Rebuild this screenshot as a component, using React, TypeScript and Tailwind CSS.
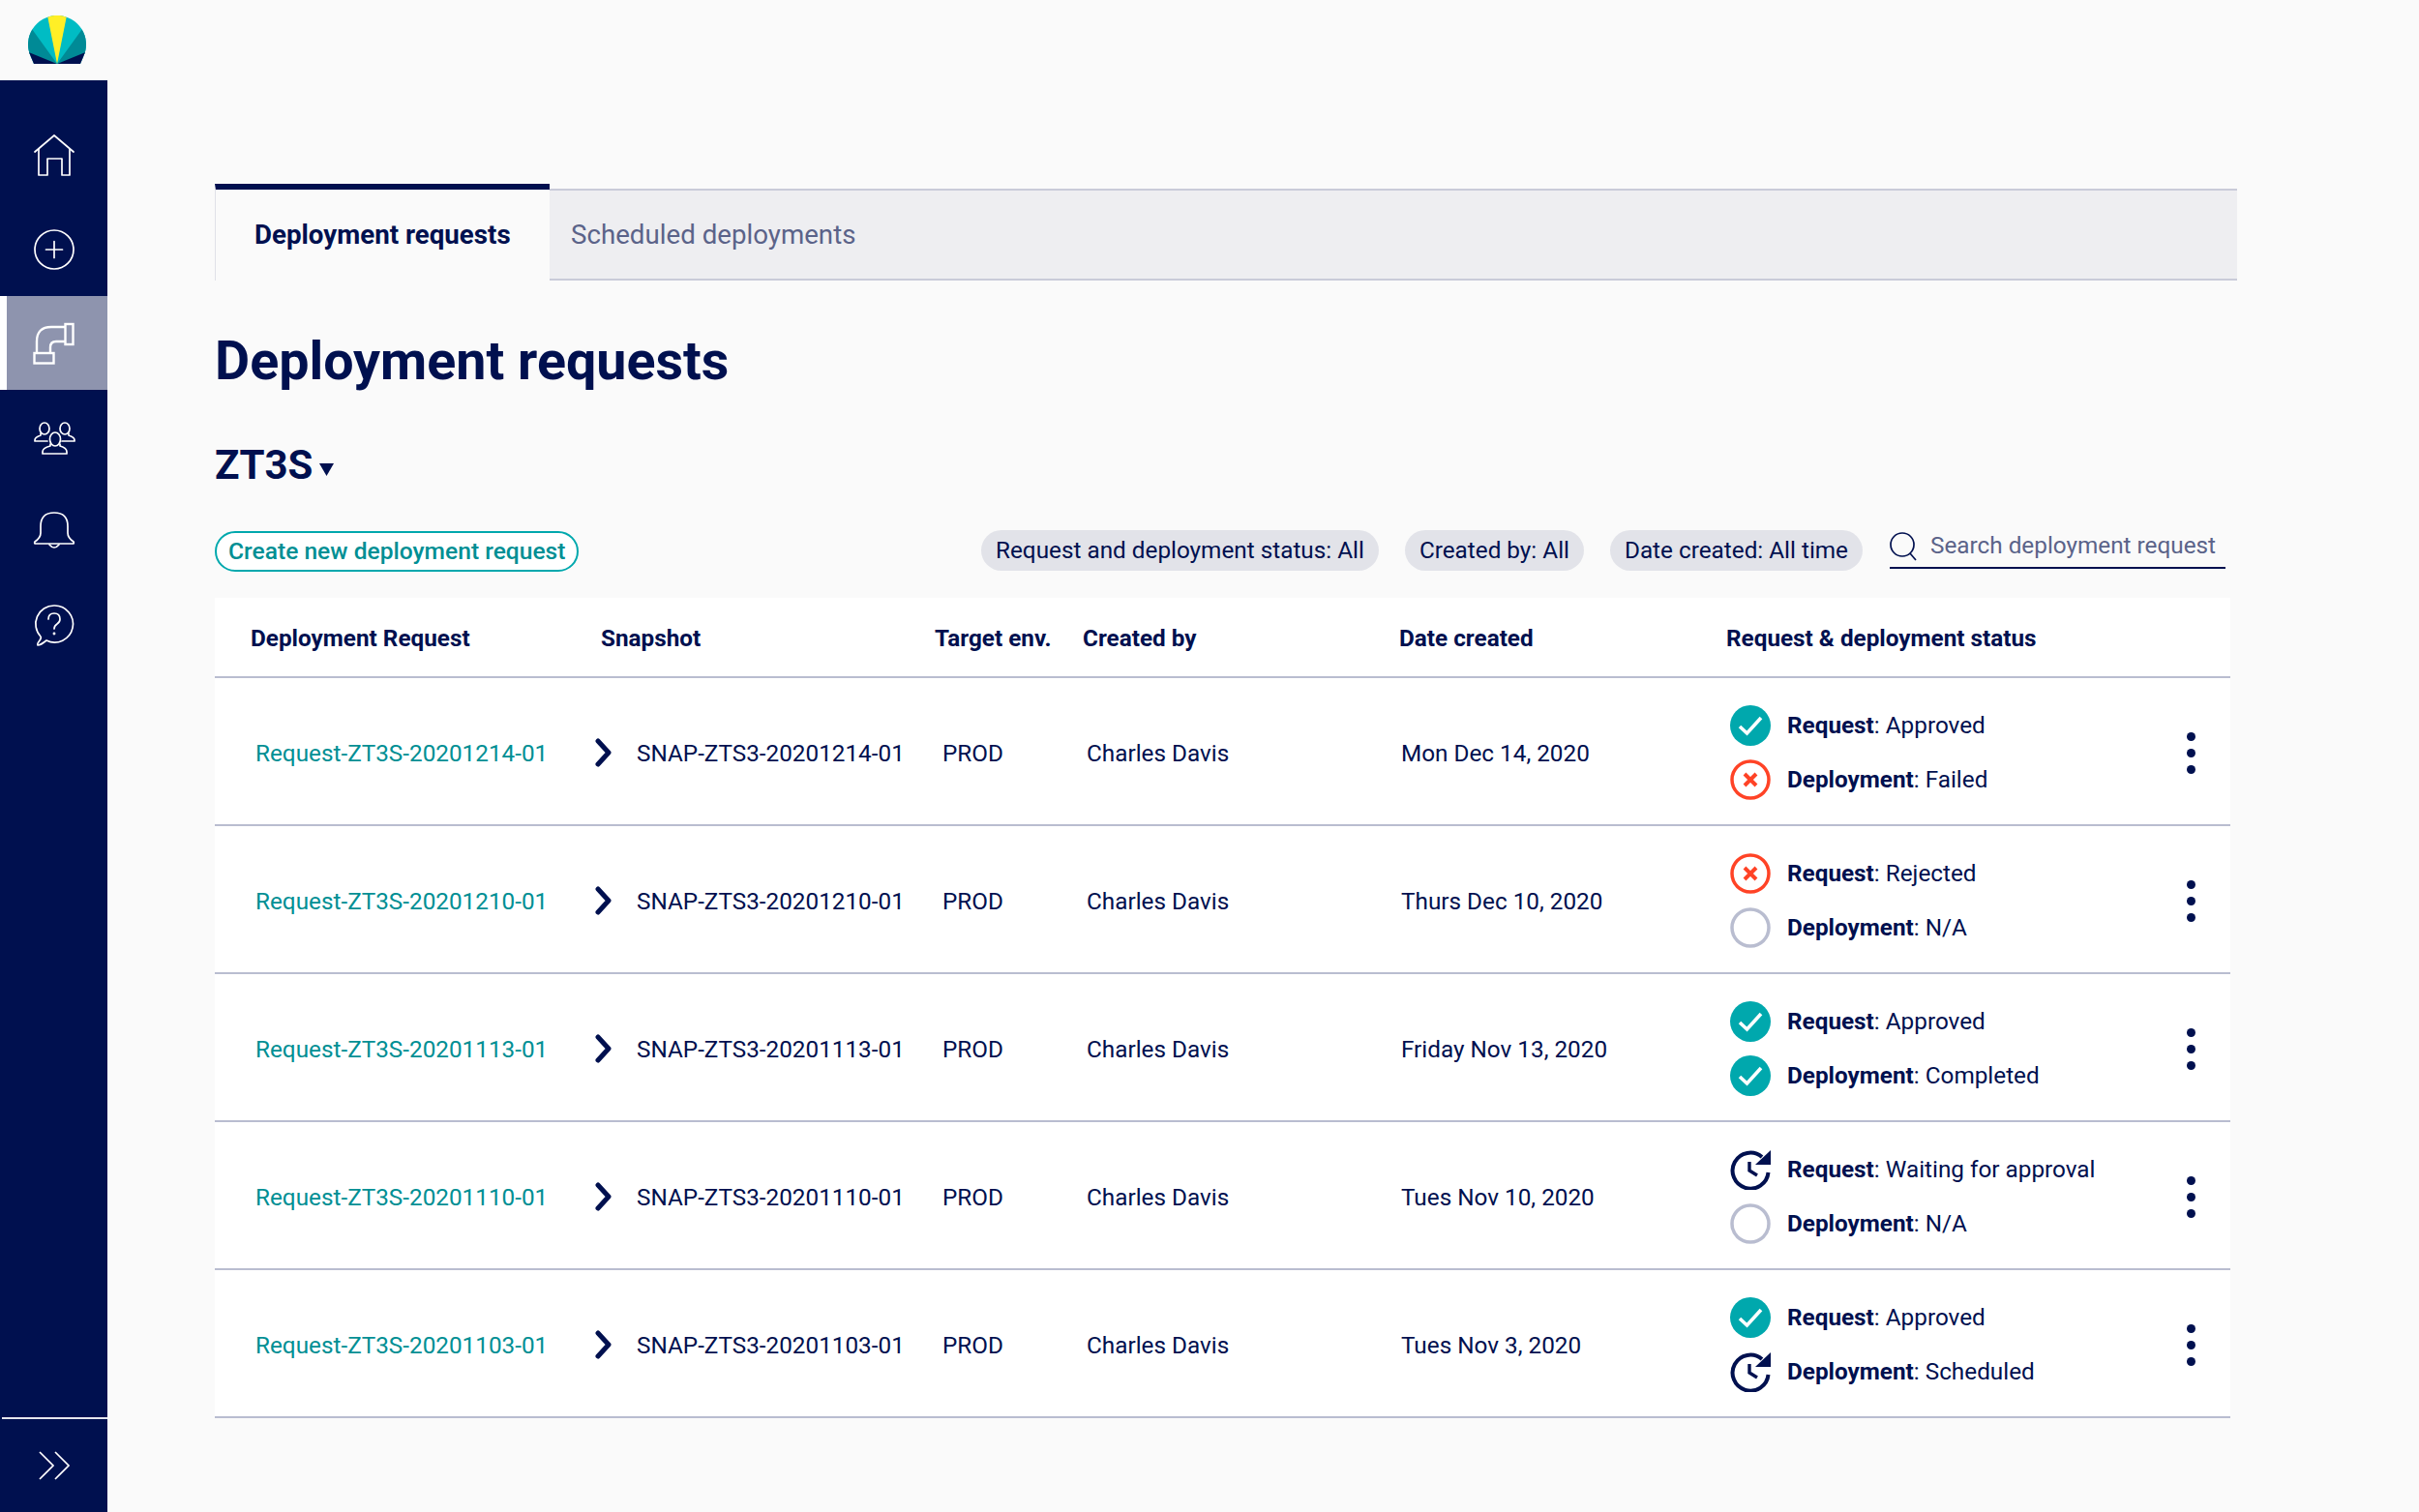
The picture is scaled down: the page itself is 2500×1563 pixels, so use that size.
const rows = [
  { id: "20201214", date: "Mon Dec 14, 2020", req: ["ok", "Approved"], dep: ["fail", "Failed"] },
  { id: "20201210", date: "Thurs Dec 10, 2020", req: ["fail", "Rejected"], dep: ["none", "N/A"] },
  { id: "20201113", date: "Friday Nov 13, 2020", req: ["ok", "Approved"], dep: ["ok", "Completed"] },
  { id: "20201110", date: "Tues Nov 10, 2020", req: ["wait", "Waiting for approval"], dep: ["none", "N/A"] },
  { id: "20201103", date: "Tues Nov 3, 2020", req: ["ok", "Approved"], dep: ["wait", "Scheduled"] },
]

const gridCols = "grid grid-cols-[384px_349px_155px_330px_340px_450px_75px] items-center"

function Logo() {
  return (
    <svg width="60" height="50" viewBox="0 0 60 50">
      <clipPath id="dome">
        <path d="M3 43 A30 30 0 1 1 57 43 L54 50 H6 Z" />
      </clipPath>
      <g clipPath="url(#dome)">
        <rect width="60" height="50" fill="#00bcc4" />
        <path d="M30 50 L4 14 L-4 14 L-4 38 Z M30 50 L56 14 L64 14 L64 38 Z" fill="#008a96" />
        <path d="M30 50 L-4 36 L-4 50 Z M30 50 L64 36 L64 50 Z" fill="#00104f" />
        <path d="M30 50 L20 0 L40 0 Z" fill="#ffef26" />
      </g>
    </svg>
  )
}

function NavIcon({ name }: { name: string }) {
  const common = { width: 44, height: 44, viewBox: "0 0 44 44", fill: "none", stroke: "white", strokeLinecap: "round" as const, strokeLinejoin: "round" as const }
  if (name === "home")
    return (
      <svg {...common} strokeWidth="1.7">
        <path d="M2 18 L22 1 L42 18" />
        <path d="M6 15 V42 H15 V25 H30 V42 H38 V15" />
      </svg>
    )
  if (name === "plus")
    return (
      <svg {...common} strokeWidth="1.7">
        <circle cx="22" cy="22" r="20" />
        <path d="M13.5 22 H30.5 M22 13.5 V30.5" />
      </svg>
    )
  if (name === "pipe")
    return (
      <svg {...common} strokeWidth="2.4" strokeLinecap="butt" strokeLinejoin="miter">
        <rect x="34.5" y="2" width="8" height="21" />
        <rect x="2.5" y="32" width="20" height="10.5" />
        <path d="M5 32 V20 Q5 5 20 5 H34.5" />
        <path d="M19 32 V26 Q19 20 25 20 H34.5" />
      </svg>
    )
  if (name === "users")
    return (
      <svg {...common} strokeWidth="1.7">
        <ellipse cx="12" cy="13" rx="5" ry="6" />
        <ellipse cx="33" cy="13" rx="5" ry="6" />
        <ellipse cx="23" cy="24" rx="5.5" ry="7" />
        <path d="M8 18 V20 Q2 22 2 25 V26 H15 M37 18 V20 Q43 22 43 25 V26 H30" />
        <path d="M18 29 V31 Q10 33 10 37 V39 H35 V37 Q35 33 28 31 V29" />
      </svg>
    )
  if (name === "bell")
    return (
      <svg {...common} strokeWidth="1.7">
        <path d="M2 33 Q8 29 8 24 V17 Q8 3 22 3 Q36 3 36 17 V24 Q36 29 42 33 Q43 35 41 35 H3 Q1 35 2 33 Z" />
        <path d="M17 36 Q22 42 27 36" />
      </svg>
    )
  return (
    <svg {...common} strokeWidth="1.7">
      <path d="M22 2 A19 19 0 1 1 14 38 Q8 43 5 43 Q4 42 7 38 Q9 35 8 34 A19 19 0 0 1 22 2 Z" />
      <path d="M16 16 Q16 10 22 10 Q28 10 28 16 Q28 19 25 21 Q22 23 22 26" />
      <circle cx="22" cy="31" r="0.6" />
    </svg>
  )
}

function StatusIcon({ kind }: { kind: string }) {
  if (kind === "ok")
    return (
      <svg width="42" height="42" viewBox="0 0 42 42">
        <circle cx="21" cy="21" r="21" fill="#00a8ad" />
        <path d="M10 22 L17.5 29 L32 13" fill="none" stroke="white" strokeWidth="3.6" />
      </svg>
    )
  if (kind === "fail")
    return (
      <svg width="42" height="42" viewBox="0 0 42 42">
        <circle cx="21" cy="21" r="19" fill="none" stroke="#ff4326" strokeWidth="3.5" />
        <path d="M15 15 L27 27 M27 15 L15 27" fill="none" stroke="#ff4326" strokeWidth="4" />
      </svg>
    )
  if (kind === "none")
    return (
      <svg width="42" height="42" viewBox="0 0 42 42">
        <circle cx="21" cy="21" r="19" fill="none" stroke="#b9bdd0" strokeWidth="3.5" />
      </svg>
    )
  return (
    <svg width="42" height="42" viewBox="0 0 42 42">
      <path d="M33 8 A18.5 18.5 0 1 0 39.5 24" fill="none" stroke="#00104f" strokeWidth="4" />
      <path d="M42 1 V16 H26 Z" fill="#00104f" />
      <path d="M20 13 V22 L28 27" fill="none" stroke="#00104f" strokeWidth="3.4" />
    </svg>
  )
}

function Status({ label, status }: { label: string; status: string[] }) {
  return (
    <div className="flex items-center gap-[17px] h-[42px]">
      <StatusIcon kind={status[0]} />
      <p>
        <b className="font-bold">{label}</b>: {status[1]}
      </p>
    </div>
  )
}

function App() {
  return (
    <div className="flex h-[1563px] w-[2500px] overflow-hidden bg-[#fafafa] font-['Roboto',sans-serif] text-[24.3px] text-[#00104f]">
      <div className="flex w-[111px] shrink-0 flex-col">
        <div className="flex h-[83px] pl-[29px] pt-[16px]">
          <Logo />
        </div>
        <div className="flex flex-1 flex-col bg-[#00104f] pt-[29px]">
          <div className="flex h-[97px] items-center justify-center"><NavIcon name="home" /></div>
          <div className="flex h-[97px] items-center justify-center"><NavIcon name="plus" /></div>
          <div className="flex h-[97px] items-center justify-center border-l-[7px] border-white bg-[#8e94ae] pr-[9px]"><NavIcon name="pipe" /></div>
          <div className="flex h-[97px] items-center justify-center"><NavIcon name="users" /></div>
          <div className="flex h-[97px] items-center justify-center"><NavIcon name="bell" /></div>
          <div className="flex h-[97px] items-center justify-center"><NavIcon name="help" /></div>
          <div className="mt-auto ml-[2px] flex h-[98px] items-center justify-center border-t-2 border-[#e4e5ec] pr-[2px]">
            <svg width="34" height="30" viewBox="0 0 34 30" fill="none" stroke="white" strokeWidth="1.7">
              <path d="M2 1 L16 15 L2 29 M18 1 L32 15 L18 29" />
            </svg>
          </div>
        </div>
      </div>

      <div className="w-[2090px] ml-[111px] pt-[190px]">
        <div className="flex h-[100px] items-stretch text-[27.7px]">
          <div className="flex w-[346px] items-center border-t-[6px] border-l border-[#00104f] border-l-[#e0e1e8] pl-[40px] font-bold pb-[1px]">
            Deployment requests
          </div>
          <div className="mt-[5px] flex flex-1 items-center border-y-2 border-[#c9cbd9] bg-[#eeeef1] pl-[22px] text-[#5b6389]">
            Scheduled deployments
          </div>
        </div>

        <h1 className="mt-[50px] text-[55.6px] leading-[66px] font-bold">Deployment requests</h1>

        <div className="mt-[51px] flex items-center gap-[7px] text-[42px] leading-[48px] font-bold">
          ZT3S
          <svg width="15" height="14" viewBox="0 0 15 14" className="mt-[8px]"><path d="M0 1 H15 L7.5 14 Z" fill="#00104f" /></svg>
        </div>

        <div className="mt-[43px] flex h-[42px] w-[2078px] items-center">
          <button className="mt-[2px] h-[42px] rounded-full border-2 border-[#00a8ad] bg-white px-[12px] text-[24.6px] font-medium text-[#008f94]">
            Create new deployment request
          </button>
          <div className="ml-auto flex h-[42px] items-center rounded-full bg-[#e2e3e9] px-[15px]">Request and deployment status: All</div>
          <div className="ml-[27px] flex h-[42px] items-center rounded-full bg-[#e2e3e9] px-[15px]">Created by: All</div>
          <div className="ml-[27px] flex h-[42px] items-center rounded-full bg-[#e2e3e9] px-[15px]">Date created: All time</div>
          <div className="ml-[28px] mb-[3px] flex h-[40px] w-[347px] items-center gap-[14px] border-b-2 border-[#00104f] pb-[4px] text-[#5b6389]">
            <svg width="28" height="30" viewBox="0 0 28 30" fill="none" stroke="#00104f" strokeWidth="1.7">
              <circle cx="13" cy="13" r="12" />
              <path d="M21 22 L27 29" />
            </svg>
            Search deployment request
          </div>
        </div>

        <div className="mt-[28px] w-[2083px] bg-white">
          <div className={gridCols + " h-[83px] border-b-2 border-[#b9bdd0] pt-[4px] font-bold"}>
            <div className="pl-[37px]">Deployment Request</div>
            <div className="pl-[15px]">Snapshot</div>
            <div className="pl-[11px]">Target env.</div>
            <div className="pl-[9px]">Created by</div>
            <div className="pl-[6px]">Date created</div>
            <div className="pl-[4px]">Request &amp; deployment status</div>
            <div />
          </div>
          {rows.map((r) => (
            <div key={r.id} className={gridCols + " h-[153px] border-b-2 border-[#b9bdd0] pt-[3px]"}>
              <div className="pl-[42px] pt-[3px] text-[#008f94]">Request-ZT3S-{r.id}-01</div>
              <div className="flex items-center gap-[24px] pl-[8px]">
                <svg width="20" height="30" viewBox="0 0 20 30" fill="none" stroke="#00104f" strokeWidth="5" strokeLinecap="round" strokeLinejoin="round">
                  <path d="M4 3 L15 15 L4 27" />
                </svg>
                <span className="pt-[3px]">SNAP-ZTS3-{r.id}-01</span>
              </div>
              <div className="pl-[19px] pt-[3px]">PROD</div>
              <div className="pl-[13px] pt-[3px]">Charles Davis</div>
              <div className="pl-[8px] pt-[3px]">{r.date}</div>
              <div className="flex flex-col gap-[14px] pl-[8px]">
                <Status label="Request" status={r.req} />
                <Status label="Deployment" status={r.dep} />
              </div>
              <div className="flex flex-col items-center gap-[8px] pr-[7px]">
                <span className="h-[9px] w-[9px] rounded-full bg-[#00104f]" />
                <span className="h-[9px] w-[9px] rounded-full bg-[#00104f]" />
                <span className="h-[9px] w-[9px] rounded-full bg-[#00104f]" />
              </div>
            </div>
          ))}
        </div>
      </div>
    </div>
  )
}

export default App
